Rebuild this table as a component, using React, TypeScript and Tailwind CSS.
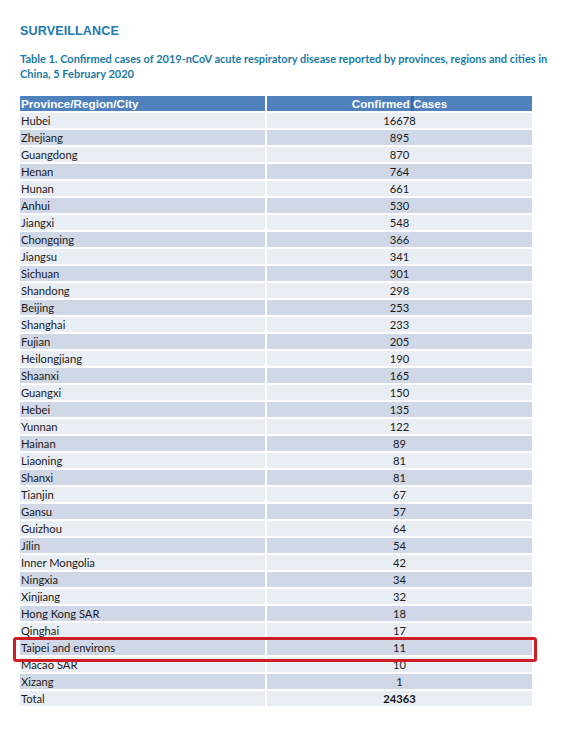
import React from "react";

const rows: [string, string][] = [
  ["Hubei", "16678"],
  ["Zhejiang", "895"],
  ["Guangdong", "870"],
  ["Henan", "764"],
  ["Hunan", "661"],
  ["Anhui", "530"],
  ["Jiangxi", "548"],
  ["Chongqing", "366"],
  ["Jiangsu", "341"],
  ["Sichuan", "301"],
  ["Shandong", "298"],
  ["Beijing", "253"],
  ["Shanghai", "233"],
  ["Fujian", "205"],
  ["Heilongjiang", "190"],
  ["Shaanxi", "165"],
  ["Guangxi", "150"],
  ["Hebei", "135"],
  ["Yunnan", "122"],
  ["Hainan", "89"],
  ["Liaoning", "81"],
  ["Shanxi", "81"],
  ["Tianjin", "67"],
  ["Gansu", "57"],
  ["Guizhou", "64"],
  ["Jilin", "54"],
  ["Inner Mongolia", "42"],
  ["Ningxia", "34"],
  ["Xinjiang", "32"],
  ["Hong Kong SAR", "18"],
  ["Qinghai", "17"],
  ["Taipei and environs", "11"],
  ["Macao SAR", "10"],
  ["Xizang", "1"],
];

export default function App() {
  return (
    <div className="w-[565px] h-[730px] bg-white overflow-hidden pl-[20px] pt-[24px]">
      <h1 className="font-['Liberation_Sans',Arial,sans-serif] text-[12.6px] leading-[15px] font-bold text-[#2079b0] tracking-[0.1px]">
        SURVEILLANCE
      </h1>
      <p className="mt-[12px] font-['Lato','Open_Sans',sans-serif] text-[11px] leading-[15px] font-bold text-[#1c7aa5] whitespace-nowrap">
        Table 1. Confirmed cases of 2019-nCoV acute respiratory disease reported by provinces, regions and cities in
        <br />
        China, 5 February 2020
      </p>
      <div className="relative mt-[15px] w-[512px] font-['Lato','Open_Sans',sans-serif] text-[11.2px] leading-[15px] text-[#1a1a1a]">
        <div className="grid grid-cols-[245px_265px] gap-x-[2px] gap-y-[2px]">
          <div className="h-[15px] bg-[#4f81bd] text-white font-bold font-['Liberation_Sans',Arial,sans-serif] text-[11.7px] pl-[1px]">
            Province/Region/City
          </div>
          <div className="h-[15px] bg-[#4f81bd] text-white font-bold font-['Liberation_Sans',Arial,sans-serif] text-[11.6px] text-center">
            Confirmed
            <span className="inline-block align-top w-[3px] h-[15px] bg-[#3c69a6] ml-[1px] -mr-[4px]" /> Cases
          </div>
          {rows.map(([name, n], i) => {
            const bg = i % 2 === 0 ? "bg-[#e9edf4]" : "bg-[#d0d8e8]";
            return (
              <React.Fragment key={name}>
                <div className={`h-[15px] ${bg} pl-[1px]`}>{name}</div>
                <div className={`h-[15px] ${bg} text-center`}>{n}</div>
              </React.Fragment>
            );
          })}
          <div className="h-[15px] bg-[#e9edf4] pl-[1px]">Total</div>
          <div className="h-[15px] bg-[#e9edf4] font-bold text-[#111] text-center">24363</div>
        </div>
        <div className="absolute left-[-7px] top-[541px] w-[524px] h-[25px] border-[3px] border-[#cf1f25] rounded-[3px]" />
      </div>
    </div>
  );
}
